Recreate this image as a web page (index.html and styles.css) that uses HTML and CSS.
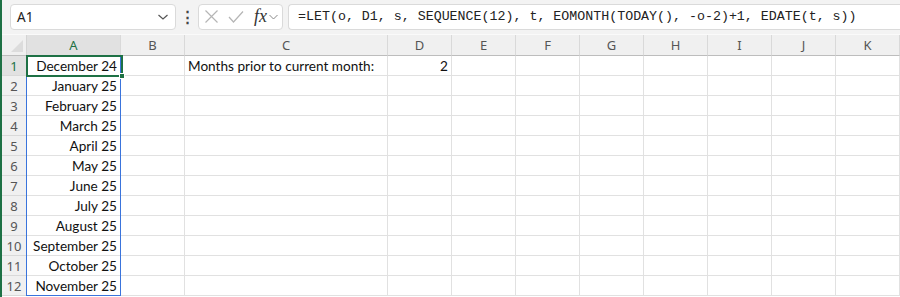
FILE: index.html
```html
<!DOCTYPE html>
<html lang="en">
  <head>
    <meta charset="UTF-8" />
    <title>Month list</title>
    <link rel="stylesheet" href="styles.css">
  </head>
  <body>
    <div class="app">
      <div class="formula-bar">
        <div class="name-box">
          <span>A1</span>
          <svg class="chev" width="12" height="8" viewBox="0 0 12 8"><path d="M1.5 2 L6 6 L10.5 2" fill="none" stroke="#555" stroke-width="1.2"/></svg>
        </div>
        <div class="dots">&#8942;</div>
        <div class="fx-box">
          <svg width="13" height="13" viewBox="0 0 13 13"><path d="M0.5 0.5 L12.5 12.5 M12.5 0.5 L0.5 12.5" stroke="#b5b5b5" stroke-width="1.2"/></svg>
          <svg width="16" height="13" viewBox="0 0 16 13"><path d="M1 7 L5.5 12 L15 1.5" fill="none" stroke="#b5b5b5" stroke-width="1.2"/></svg>
          <span class="fx">fx</span>
          <svg class="fx-chev" width="9" height="6" viewBox="0 0 9 6"><path d="M0.5 1 L4.5 5 L8.5 1" fill="none" stroke="#888" stroke-width="1"/></svg>
        </div>
        <div class="formula">=LET(o, D1, s, SEQUENCE(12), t, EOMONTH(TODAY(), -o-2)+1, EDATE(t, s))</div>
      </div>
      <div class="sheet" id="sheet">
        <div class="corner"></div>
      </div>
    </div>
    <script>
      const cols = ["A", "B", "C", "D", "E", "F", "G", "H", "I", "J", "K"];
      const months = ["December 24", "January 25", "February 25", "March 25", "April 25", "May 25",
        "June 25", "July 25", "August 25", "September 25", "October 25", "November 25"];
      const sheet = document.getElementById("sheet");

      cols.forEach((c) => {
        const h = document.createElement("div");
        h.className = "col-head" + (c === "A" ? " active" : "");
        h.textContent = c;
        sheet.appendChild(h);
      });

      for (let r = 1; r <= 12; r++) {
        const rh = document.createElement("div");
        rh.className = "row-head" + (r === 1 ? " active" : "");
        rh.textContent = r;
        sheet.appendChild(rh);
        cols.forEach((c) => {
          const cell = document.createElement("div");
          cell.className = "cell";
          if (c === "A") {
            cell.textContent = months[r - 1];
            cell.classList.add("num");
          }
          if (r === 1 && c === "C") cell.textContent = "Months prior to current month:";
          if (r === 1 && c === "D") {
            cell.textContent = "2";
            cell.classList.add("num");
          }
          sheet.appendChild(cell);
        });
      }

      // spill range + active cell outlines
      const spill = document.createElement("div");
      spill.className = "spill";
      sheet.appendChild(spill);
      const sel = document.createElement("div");
      sel.className = "selection";
      sel.innerHTML = '<span class="handle"></span>';
      sheet.appendChild(sel);
    </script>
  </body>
</html>
```

FILE: styles.css
```css
body {
  margin: 0;
  width: 900px;
  height: 297px;
  overflow: hidden;
  background-color: #fff;
  font-family: "Lato", "Liberation Sans", sans-serif;
}
.app {
  border-left: 2px solid #1e7145;
  height: 297px;
  box-sizing: border-box;
}
.formula-bar {
  display: flex;
  align-items: center;
  height: 35px;
  padding: 0 0 1px 8px;
  background-color: #f3f3f3;
  border-bottom: 1px solid #fafafa;
  box-sizing: border-box;
}
.name-box {
  display: flex;
  align-items: center;
  justify-content: space-between;
  width: 166px;
  height: 26px;
  padding: 0 6px 0 6px;
  box-sizing: border-box;
  background-color: #fff;
  border: 1px solid #dadada;
  border-radius: 4px;
  font-family: "Noto Sans", sans-serif;
  font-size: 13.5px;
  color: #222;
}
.dots {
  width: 22px;
  text-align: center;
  font-size: 15px;
  font-weight: bold;
  color: #444;
}
.fx-box {
  display: flex;
  align-items: center;
  gap: 10px;
  width: 85px;
  height: 26px;
  padding: 0 4px 0 6px;
  box-sizing: border-box;
  background-color: #fff;
  border: 1px solid #dadada;
  border-radius: 4px;
}
.fx-box .fx-chev {
  margin-left: -8px;
}
.fx {
  font-family: "Liberation Serif", serif;
  font-style: italic;
  font-size: 18px;
  color: #333;
}
.formula {
  flex: 1;
  height: 26px;
  margin-left: 5px;
  padding-left: 9px;
  box-sizing: border-box;
  background-color: #fff;
  border: 1px solid #dadada;
  border-right: none;
  border-radius: 4px 0 0 4px;
  font-family: "Liberation Mono", monospace;
  font-size: 13.3px;
  line-height: 24px;
  color: #222;
  white-space: nowrap;
}
.sheet {
  position: relative;
  display: grid;
  grid-template-columns: 25px 94px 64px 203px 64px repeat(7, 64px);
  grid-template-rows: 21px repeat(12, 20px);
}
.corner {
  background-color: #f0f0f0;
  border-right: 1px solid #d4d4d4;
  border-bottom: 1px solid #bdbdbd;
  position: relative;
}
.corner::after {
  content: "";
  position: absolute;
  right: 3px;
  bottom: 3px;
  border-style: solid;
  border-width: 0 0 12px 12px;
  border-color: transparent transparent #dcdcdc transparent;
}
.col-head,
.row-head {
  display: flex;
  align-items: center;
  justify-content: center;
  background-color: #f0f0f0;
  font-family: "Noto Sans", sans-serif;
  font-size: 13px;
  color: #555;
  box-sizing: border-box;
}
.col-head {
  border-right: 1px solid #d9d9d9;
  border-bottom: 1px solid #bdbdbd;
}
.row-head {
  border-right: 1px solid #bdbdbd;
  border-bottom: 1px solid #d9d9d9;
}
.col-head.active,
.row-head.active {
  background-color: #e1e1e1;
  color: #1e7145;
}
.cell {
  border-right: 1px solid #e1e1e1;
  border-bottom: 1px solid #e1e1e1;
  box-sizing: border-box;
  font-size: 13.6px;
  line-height: 20px;
  padding: 0 3px;
  color: #111;
  white-space: nowrap;
}
.cell.num {
  text-align: right;
}
.spill {
  position: absolute;
  left: 24px;
  top: 21px;
  width: 95px;
  height: 240px;
  border: 1px solid #3a74dc;
  box-sizing: border-box;
  pointer-events: none;
}
.selection {
  position: absolute;
  left: 24px;
  top: 20px;
  width: 97px;
  height: 22px;
  border: 2px solid #1e7145;
  box-sizing: border-box;
  pointer-events: none;
}
.handle {
  position: absolute;
  right: -4px;
  bottom: -4px;
  width: 6px;
  height: 6px;
  background-color: #1e7145;
  border: 1px solid #fff;
  box-sizing: border-box;
}
```
